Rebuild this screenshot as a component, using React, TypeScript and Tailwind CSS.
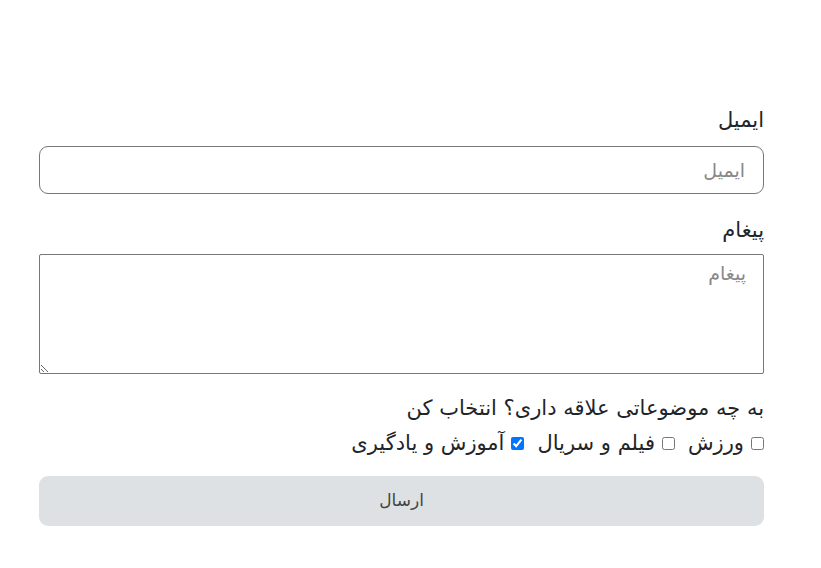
const App = () => {
  return (
    <div
      dir="rtl"
      className="min-h-screen bg-white text-[#212529] pl-[39px] pr-[57px] pt-[104px]"
      style={{ fontFamily: '"DejaVu Sans", sans-serif' }}
    >
      <form className="w-[725px]">
        <label className="block text-[21px] leading-[32px] mb-[10px]">ایمیل</label>
        <input
          type="email"
          placeholder="ایمیل"
          className="block w-full h-[48px] border border-[#777] rounded-[9px] px-[18px] text-[19px] placeholder:text-[#888] focus:outline-none"
        />
        <label className="block text-[21px] leading-[32px] mt-[20px] mb-[8px]">پیغام</label>
        <textarea
          placeholder="پیغام"
          className="block w-full h-[120px] border border-[#777] rounded-[2px] px-[17px] py-[4px] text-[19px] placeholder:text-[#888] focus:outline-none"
        />
        <div className="text-[21px] leading-[32px] mt-[18px]">به چه موضوعاتی علاقه داری؟ انتخاب کن</div>
        <div className="flex items-center text-[21px] leading-[32px] mt-[3px]">
          <label className="flex items-center gap-[7px] ml-[13px]">
            <input type="checkbox" className="w-[13px] h-[13px]" />
            ورزش
          </label>
          <label className="flex items-center gap-[7px] ml-[13px]">
            <input type="checkbox" className="w-[13px] h-[13px]" />
            فیلم و سریال
          </label>
          <label className="flex items-center gap-[7px]">
            <input type="checkbox" defaultChecked className="w-[13px] h-[13px]" />
            آموزش و یادگیری
          </label>
        </div>
        <button
          type="button"
          className="block w-full h-[50px] mt-[17px] bg-[#dee1e4] rounded-[9px] text-[17px] text-[#444]"
        >
          ارسال
        </button>
      </form>
    </div>
  );
};

export default App;
